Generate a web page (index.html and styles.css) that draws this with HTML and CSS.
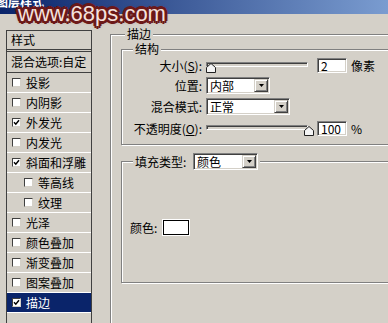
FILE: index.html
```html
<!DOCTYPE html>
<html lang="zh-CN">
<head>
<meta charset="utf-8">
<title>图层样式</title>
<link rel="stylesheet" href="styles.css">
</head>
<body>
<div class="dialog">
  <div class="titlebar"><span class="title">图层样式</span></div>
  <div class="watermark">www.68ps.com</div>
  <div class="main">
    <ul class="style-list">
      <li class="item head">样式</li>
      <li class="item blend">混合选项:自定</li>
      <li class="item fx"><span class="cb"></span>投影</li>
      <li class="item fx"><span class="cb"></span>内阴影</li>
      <li class="item fx"><span class="cb on"><svg viewBox="0 0 7 7" width="7" height="7"><polyline points="1,3.2 2.8,5.2 6,1.2" fill="none" stroke="#000" stroke-width="1.5"/></svg></span>外发光</li>
      <li class="item fx"><span class="cb"></span>内发光</li>
      <li class="item fx"><span class="cb on"><svg viewBox="0 0 7 7" width="7" height="7"><polyline points="1,3.2 2.8,5.2 6,1.2" fill="none" stroke="#000" stroke-width="1.5"/></svg></span>斜面和浮雕</li>
      <li class="item fx sub"><span class="cb"></span>等高线</li>
      <li class="item fx sub"><span class="cb"></span>纹理</li>
      <li class="item fx"><span class="cb"></span>光泽</li>
      <li class="item fx"><span class="cb"></span>颜色叠加</li>
      <li class="item fx"><span class="cb"></span>渐变叠加</li>
      <li class="item fx"><span class="cb"></span>图案叠加</li>
      <li class="item fx sel"><span class="cb on"><svg viewBox="0 0 7 7" width="7" height="7"><polyline points="1,3.2 2.8,5.2 6,1.2" fill="none" stroke="#000" stroke-width="1.5"/></svg></span>描边</li>
    </ul>

    <fieldset class="group outer">
      <legend>描边</legend>

      <fieldset class="group structure">
        <legend>结构</legend>
        <div class="form">
          <label class="lbl">大小(<u>S</u>):</label>
          <div class="ctl">
            <div class="slider">
              <span class="track"></span>
              <svg class="thumb at-start" viewBox="0 0 10 10" width="10" height="10"><polygon points="5,0.5 9.5,4.5 9.5,9.5 0.5,9.5 0.5,4.5" fill="#f4f4f4" stroke="#202020"/></svg>
            </div>
            <span class="field num">2</span>
            <span class="unit">像素</span>
          </div>

          <label class="lbl">位置:</label>
          <div class="ctl">
            <div class="combo w64"><span class="val">内部</span><span class="btn"><svg viewBox="0 0 5 3" width="5" height="3"><polygon points="0,0 5,0 2.5,3" fill="#000"/></svg></span></div>
          </div>

          <label class="lbl">混合模式:</label>
          <div class="ctl">
            <div class="combo w84"><span class="val">正常</span><span class="btn"><svg viewBox="0 0 5 3" width="5" height="3"><polygon points="0,0 5,0 2.5,3" fill="#000"/></svg></span></div>
          </div>

          <label class="lbl">不透明度(<u>O</u>):</label>
          <div class="ctl">
            <div class="slider">
              <span class="track"></span>
              <svg class="thumb at-end" viewBox="0 0 10 10" width="10" height="10"><polygon points="5,0.5 9.5,4.5 9.5,9.5 0.5,9.5 0.5,4.5" fill="#f4f4f4" stroke="#202020"/></svg>
            </div>
            <span class="field num">100</span>
            <span class="unit">%</span>
          </div>
        </div>
      </fieldset>

      <fieldset class="group fill">
        <legend>
          <span class="fill-label">填充类型:</span>
          <span class="combo w65"><span class="val">颜色</span><span class="btn"><svg viewBox="0 0 5 3" width="5" height="3"><polygon points="0,0 5,0 2.5,3" fill="#000"/></svg></span></span>
        </legend>
        <div class="color-row">
          <span class="color-label">颜色:</span>
          <span class="swatch"></span>
        </div>
      </fieldset>
    </fieldset>
  </div>
</div>
</body>
</html>
```

FILE: styles.css
```css
html, body {
  margin: 0;
  padding: 0;
  background: #d4d0c8;
}

.dialog {
  position: relative;
  width: 388px;
  height: 323px;
  overflow: hidden;
  background: #d4d0c8;
  display: flex;
  flex-direction: column;
  font-family: "Noto Sans CJK SC", "Noto Sans", sans-serif;
  font-size: 12px;
  line-height: 14px;
  color: #000;
}

/* title bar */
.titlebar {
  flex: none;
  height: 14px;
  overflow: hidden;
  background: linear-gradient(90deg, #0a246a 0%, #42609d 50%, #7a9cd0 100%);
}

.title {
  display: block;
  margin: -5px 0 0 -4px;
  color: #fff;
  font-weight: bold;
  font-size: 12px;
  line-height: 14px;
}

/* watermark overlay */
.watermark {
  position: absolute;
  left: 18px;
  top: 3px;
  font-family: "Liberation Sans", Arial, sans-serif;
  font-size: 22px;
  line-height: 22px;
  color: #f4e2de;
  text-shadow:
    3px 0 0 #6c1818, -3px 0 0 #6c1818,
    0 3px 0 #6c1818, 0 -3px 0 #6c1818,
    2px 2px 0 #6c1818, -2px 2px 0 #6c1818,
    2px -2px 0 #6c1818, -2px -2px 0 #6c1818,
    0 0 3px #6c1818, 0 0 4px #7a2020;
}

.main {
  flex: 1;
  display: flex;
  align-items: stretch;
  min-height: 0;
}

/* left style list */
.style-list {
  flex: none;
  list-style: none;
  margin: 16px 0 0 6px;
  padding: 0;
  width: 86px;
  box-sizing: border-box;
  border-left: 1px solid #404040;
  border-right: 1px solid #404040;
}

.item {
  display: flex;
  align-items: center;
  box-sizing: border-box;
  white-space: nowrap;
}

.head {
  height: 20px;
  padding-left: 4px;
  border-top: 1px solid #404040;
  border-bottom: 1px solid #404040;
}

.blend {
  height: 22px;
  margin-top: 1px;
  padding-left: 4px;
  border-top: 1px solid #404040;
  border-bottom: 1px solid #404040;
}

.fx {
  height: 20px;
  padding-left: 5px;
  border-bottom: 1px solid #fff;
}

.fx.sub {
  padding-left: 17px;
}

.fx.sel {
  background: #0a246a;
  color: #fff;
}

.cb {
  flex: none;
  width: 9px;
  height: 9px;
  box-sizing: border-box;
  margin-right: 5px;
  background: #fff;
  border: 1px solid;
  border-color: #404040 #d4d0c8 #d4d0c8 #404040;
  display: flex;
  align-items: center;
  justify-content: center;
}

.cb svg {
  display: block;
}

/* group boxes */
.group {
  margin: 0;
  padding: 0;
  min-width: 0;
  border: 1px solid #808080;
  box-shadow: inset 1px 1px 0 #fff, 1px 1px 0 #fff;
}

.group > legend {
  padding: 0 2px;
  background: #d4d0c8;
  line-height: 14px;
}

.outer {
  flex: none;
  width: 300px;
  height: 400px;
  margin: 13px 0 0 18px;
  padding: 0 0 0 10px;
  box-sizing: border-box;
}

.outer > legend {
  margin-left: 4px;
}

.structure {
  width: 290px;
  margin-top: 1px;
  padding: 0 0 4px 0;
}

.structure > legend {
  margin-left: 11px;
}

.form {
  display: grid;
  grid-template-columns: 80px auto;
  grid-template-rows: 19px 21px 21px 23px;
  column-gap: 4px;
  align-items: center;
}

.lbl {
  text-align: right;
  white-space: nowrap;
}

.lbl u {
  text-decoration: underline;
}

.ctl {
  display: flex;
  align-items: center;
}

/* slider */
.slider {
  position: relative;
  flex: none;
  width: 102px;
  height: 15px;
}

.track {
  display: block;
  margin-top: 4px;
  height: 5px;
  box-sizing: border-box;
  background: #d4d0c8;
  border: 1px solid;
  border-color: #808080 #fff #fff #808080;
  box-shadow: inset 1px 1px 0 #404040;
}

.thumb {
  position: absolute;
  top: 5px;
  display: block;
}

.thumb.at-start {
  left: 0;
}

.thumb.at-end {
  left: 98px;
}

/* sunken edit fields */
.field {
  flex: none;
  box-sizing: border-box;
  height: 15px;
  background: #fff;
  border: 1px solid;
  border-color: #808080 #fff #fff #808080;
  box-shadow: inset 1px 1px 0 #404040, inset -1px -1px 0 #d4d0c8;
  padding-left: 3px;
  line-height: 13px;
}

.num {
  width: 30px;
  margin-left: 9px;
}

.unit {
  margin-left: 4px;
}

/* combo boxes */
.combo {
  flex: none;
  display: flex;
  align-items: center;
  box-sizing: border-box;
  height: 17px;
  padding: 1px;
  background: #fff;
  border: 1px solid;
  border-color: #808080 #fff #fff #808080;
  box-shadow: inset 1px 1px 0 #404040, inset -1px -1px 0 #d4d0c8;
}

.w64 { width: 64px; }
.w84 { width: 84px; }
.w65 { width: 65px; }

.combo .val {
  padding-left: 2px;
  line-height: 13px;
}

.combo .btn {
  margin-left: auto;
  width: 14px;
  height: 13px;
  box-sizing: border-box;
  background: #d4d0c8;
  border: 1px solid;
  border-color: #d4d0c8 #404040 #404040 #d4d0c8;
  box-shadow: inset 1px 1px 0 #fff, inset -1px -1px 0 #808080;
  display: flex;
  align-items: center;
  justify-content: center;
}

.combo .btn svg {
  display: block;
}

/* fill type group */
.fill {
  width: 290px;
  margin-top: 8px;
  padding: 0 0 47px 0;
}

.fill > legend {
  display: flex;
  align-items: center;
  height: 17px;
  margin-left: 11px;
}

.fill-label {
  width: 56px;
  white-space: nowrap;
}

.fill-label + .combo {
  margin-left: 2px;
}

.color-row {
  display: flex;
  align-items: center;
  height: 15px;
  margin-top: 50px;
  padding-left: 8px;
}

.color-label {
  width: 33px;
  white-space: nowrap;
}

.swatch {
  width: 26px;
  height: 15px;
  box-sizing: border-box;
  background: #fff;
  border: 1px solid #000;
  box-shadow: 0 0 0 1px #fff;
}
```
